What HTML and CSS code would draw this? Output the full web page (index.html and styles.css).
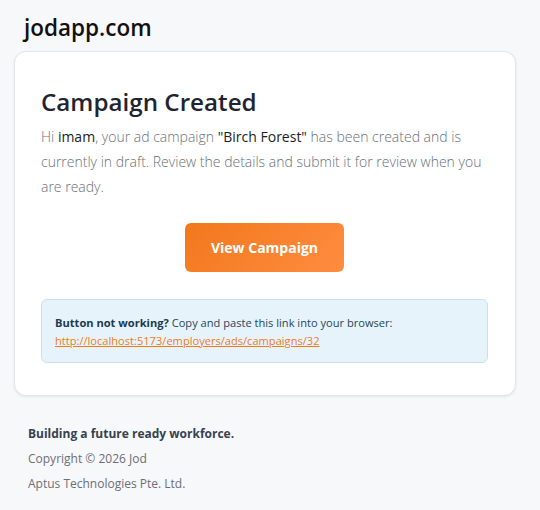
FILE: index.html
```html
<!DOCTYPE html>
<html>
<head>
<meta charset="utf-8">
<link rel="stylesheet" href="styles.css">
</head>
<body>
<div class="page">
  <div class="brand">jodapp.com</div>
  <div class="card">
    <h1 class="title">Campaign Created</h1>
    <p class="lead">Hi <span class="strong">imam</span>, your ad campaign <span class="strong">"Birch Forest"</span> has been created and is currently in draft. Review the details and submit it for review when you are ready.</p>
    <div class="cta-row"><a class="cta" href="#">View Campaign</a></div>
    <div class="note">
      <div><b>Button not working?</b> Copy and paste this link into your browser:</div>
      <a class="link" href="#">http://localhost:5173/employers/ads/campaigns/32</a>
    </div>
  </div>
  <div class="footer">
    <div class="tagline">Building a future ready workforce.</div>
    <div class="copy">Copyright © 2026 Jod</div>
    <div class="copy">Aptus Technologies Pte. Ltd.</div>
  </div>
</div>
</body>
</html>
```

FILE: styles.css
```css
html, body {
  margin: 0;
  padding: 0;
  background: #f7f8fa;
  font-family: "Open Sans", "Noto Sans", sans-serif;
}
.page {
  padding: 14px 24px 0 14px;
}
.brand {
  padding-left: 10px;
  font-size: 22.5px;
  font-weight: 600;
  color: #111111;
  line-height: 28px;
  height: 37px;
}
.card {
  width: 447px;
  background: #ffffff;
  border: 1px solid #e3e5e8;
  border-radius: 12px;
  box-shadow: 0 1px 3px rgba(0,0,0,0.08);
  padding: 30px 27px 32px 26px;
}
.title {
  margin: 0;
  font-size: 24.2px;
  font-weight: 600;
  color: #1f2430;
  line-height: 40px;
}
.lead {
  margin: 2px 0 0 0;
  font-size: 14px;
  line-height: 25px;
  font-weight: 300;
  color: #6b6f78;
}
.strong {
  color: #1a1d24;
  font-weight: 400;
}
.cta-row {
  display: flex;
  justify-content: center;
  margin-top: 24px;
}
.cta {
  display: flex;
  align-items: center;
  justify-content: center;
  width: 159px;
  height: 49px;
  border-radius: 6px;
  background: linear-gradient(135deg, #f2781c 0%, #ff8c40 100%);
  color: #ffffff;
  font-weight: 700;
  font-size: 14px;
  text-decoration: none;
}
.note {
  margin-top: 27px;
  background: #e7f3fb;
  border: 1px solid #c3e2ee;
  border-radius: 6px;
  padding: 14px 13px 12px 13px;
  font-size: 11.1px;
  line-height: 18px;
  color: #26465a;
}
.note b {
  color: #1c3a4e;
  font-weight: 700;
}
.link {
  color: #f47a20;
  text-decoration: underline;
}
.footer {
  padding: 28px 0 0 14px;
}
.tagline {
  font-size: 12px;
  font-weight: 700;
  color: #374151;
  line-height: 20px;
}
.copy {
  margin-top: 5px;
  font-size: 12px;
  color: #6b6f78;
  line-height: 20px;
}
```
